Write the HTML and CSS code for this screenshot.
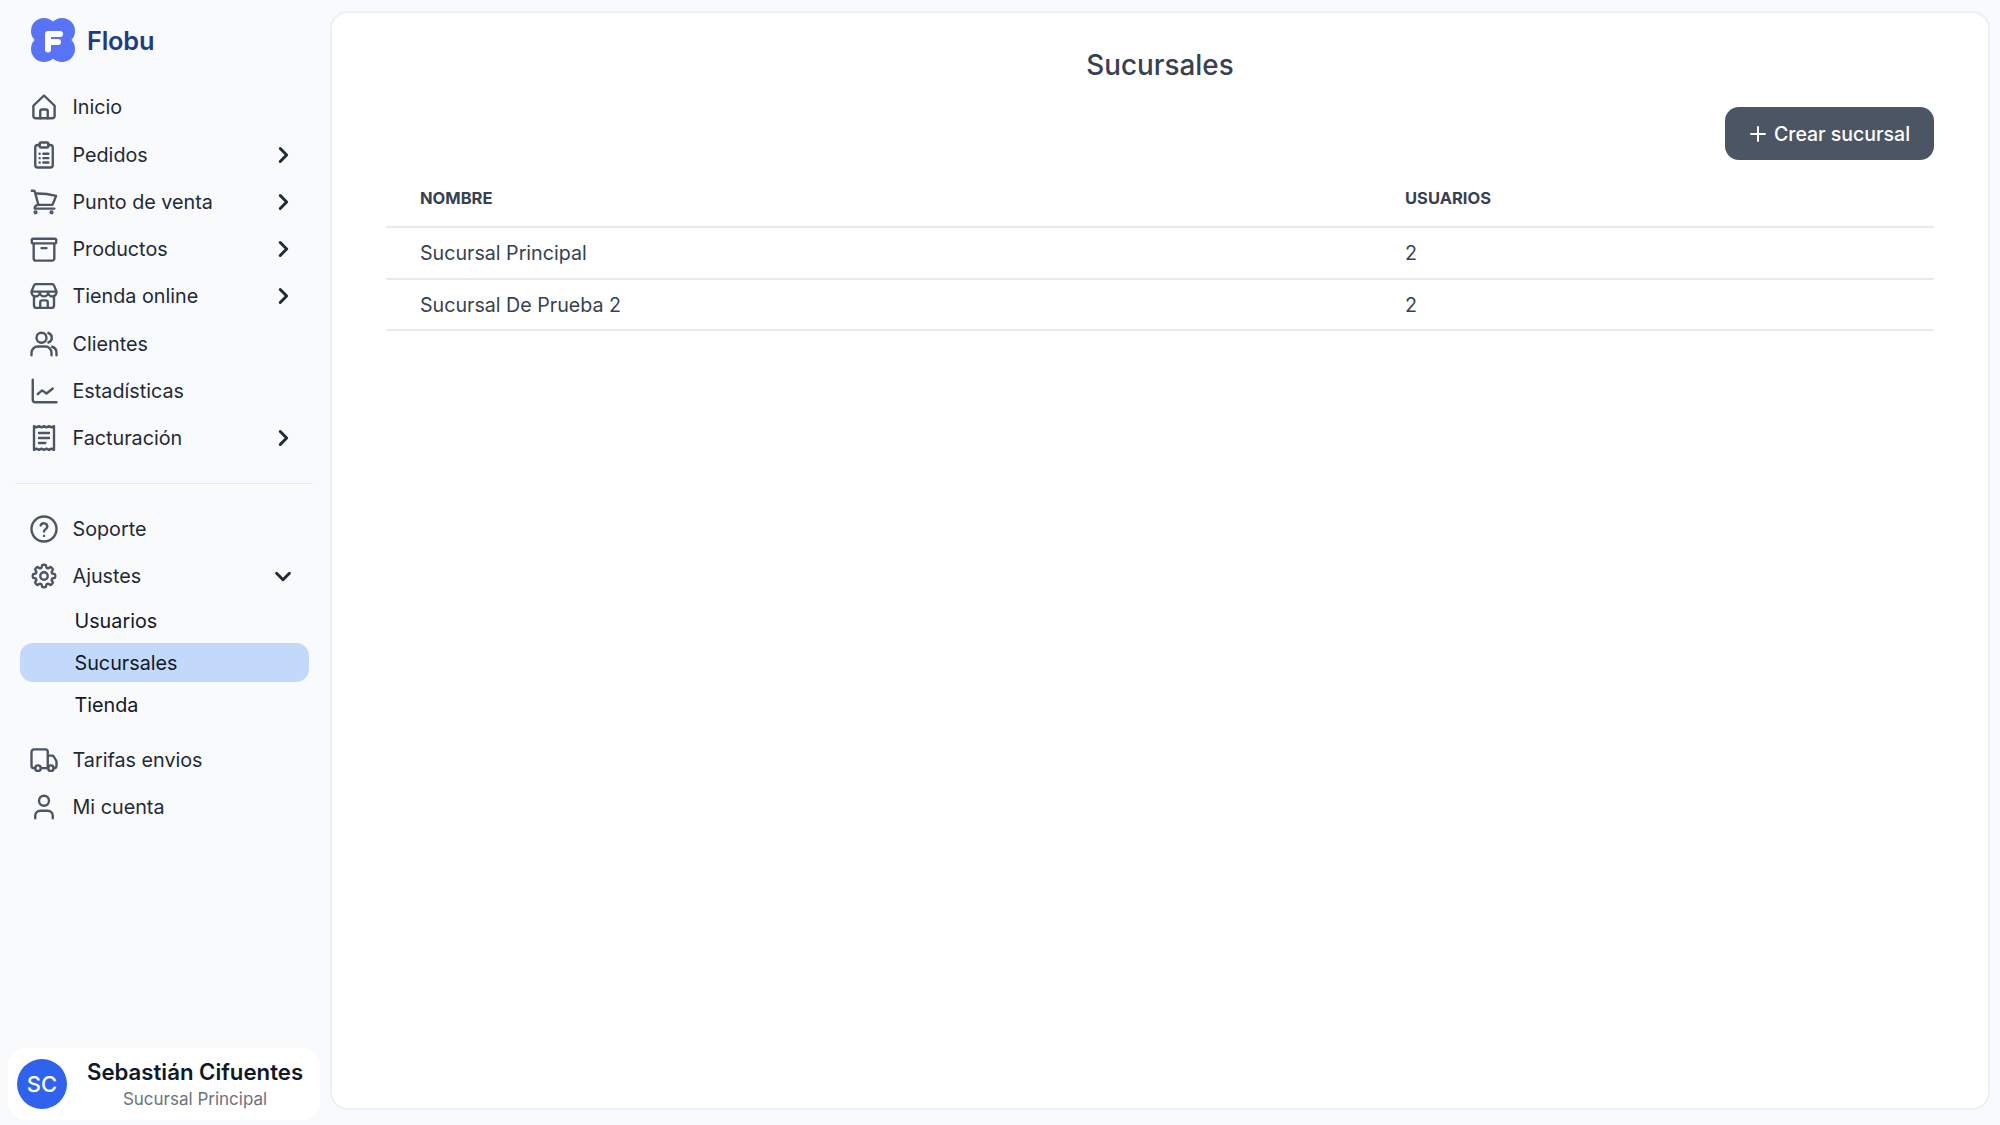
FILE: index.html
```html
<!DOCTYPE html>
<html lang="es">
<head>
<meta charset="utf-8">
<title>Sucursales</title>
<link rel="stylesheet" href="styles.css">
</head>
<body>
<div class="app">
  <aside class="sidebar">
    <div class="brand">
      <svg class="logo" viewBox="0 0 44 44"><g fill="#5873f7"><circle cx="13" cy="13" r="13"/><circle cx="31" cy="13" r="13"/><circle cx="13" cy="31" r="13"/><circle cx="31" cy="31" r="13"/><rect x="8" y="8" width="28" height="28"/></g><path fill="none" stroke="#fff" stroke-width="6" stroke-linecap="round" stroke-linejoin="round" d="M17 31.500V16h12M17 24h10"/></svg>
      <span class="brand-name">Flobu</span>
    </div>
    <nav class="nav">
      <a class="item"><svg class="icon" viewBox="0 0 24 24"><path d="M3.500 11 12 2.800l8.500 8.200V19a2 2 0 0 1-2 2h-13a2 2 0 0 1-2-2Z"/><path d="M9 21v-5.500A1.500 1.500 0 0 1 10.500 14h3a1.500 1.500 0 0 1 1.500 1.500V21"/></svg><span class="label">Inicio</span></a>
      <a class="item"><svg class="icon" viewBox="0 0 24 24"><path d="M8.500 4H7a2 2 0 0 0-2 2v14a2 2 0 0 0 2 2h10a2 2 0 0 0 2-2V6a2 2 0 0 0-2-2h-1.500"/><rect x="8.500" y="2" width="7" height="4" rx="1.200"/><path d="M8.500 11h.01M11.500 11h4M8.500 14.500h.01M11.500 14.500h4M8.500 18h.01M11.500 18h4"/></svg><span class="label">Pedidos</span><svg class="chev" viewBox="0 0 24 24"><path d="m9 5 7 7-7 7"/></svg></a>
      <a class="item"><svg class="icon" viewBox="0 0 24 24"><path d="M2.250 3h1.386c.51 0 .955.343 1.087.835l.383 1.437M7.500 14.250a3 3 0 0 0-3 3h15.750m-12.750-3h11.218c1.121-2.300 2.100-4.684 2.924-7.138a60.114 60.114 0 0 0-16.536-1.840M7.500 14.250 5.106 5.272M6 20.250a.75.75 0 1 1-1.500 0 .75.75 0 0 1 1.500 0Zm12.750 0a.75.75 0 1 1-1.500 0 .75.75 0 0 1 1.500 0Z"/></svg><span class="label">Punto de venta</span><svg class="chev" viewBox="0 0 24 24"><path d="m9 5 7 7-7 7"/></svg></a>
      <a class="item"><svg class="icon" viewBox="0 0 24 24"><path d="M20.250 7.500v12a1.750 1.750 0 0 1-1.750 1.750h-13a1.750 1.750 0 0 1-1.750-1.750v-12M10 11.250h4M3.375 7.500h17.250c.621 0 1.125-.504 1.125-1.125v-1.500c0-.621-.504-1.125-1.125-1.125H3.375c-.621 0-1.125.504-1.125 1.125v1.500c0 .621.504 1.125 1.125 1.125Z"/></svg><span class="label">Productos</span><svg class="chev" viewBox="0 0 24 24"><path d="m9 5 7 7-7 7"/></svg></a>
      <a class="item"><svg class="icon" viewBox="0 0 24 24"><path d="M2 8.500V9a3.300 3.300 0 0 0 6.700 0 3.300 3.300 0 0 0 6.600 0A3.300 3.300 0 0 0 22 9v-.5L20 3.500a1.500 1.500 0 0 0-1.400-1H5.400a1.500 1.500 0 0 0-1.400 1ZM2 8.500h20M8.700 8.500V9M15.300 8.500V9"/><path d="M4 12v7.500a2 2 0 0 0 2 2h12a2 2 0 0 0 2-2V12"/><path d="M9 21.500V17a1.500 1.500 0 0 1 1.500-1.500h3A1.500 1.500 0 0 1 15 17v4.500"/></svg><span class="label">Tienda online</span><svg class="chev" viewBox="0 0 24 24"><path d="m9 5 7 7-7 7"/></svg></a>
      <a class="item"><svg class="icon" viewBox="0 0 24 24"><circle cx="10" cy="7" r="4"/><path d="M2 21v-2a5 5 0 0 1 5-5h6a5 5 0 0 1 5 5v2M15.500 3.200a4 4 0 0 1 0 7.600M22 21v-2a5 5 0 0 0-3.500-4.800"/></svg><span class="label">Clientes</span></a>
      <a class="item"><svg class="icon" viewBox="0 0 24 24"><path d="M3 3v16a2 2 0 0 0 2 2h17"/><path d="m7 14.500 3.500-3 3.500 2.500 5-4"/></svg><span class="label">Estadísticas</span></a>
      <a class="item"><svg class="icon" viewBox="0 0 24 24"><path d="M4 2.500 6 3.500l2-1 2 1 2-1 2 1 2-1 2 1 2-1v19l-2-1-2 1-2-1-2 1-2-1-2 1-2-1-2 1Z"/><path d="M8 8h8M8 12h8M8 16h5"/></svg><span class="label">Facturación</span><svg class="chev" viewBox="0 0 24 24"><path d="m9 5 7 7-7 7"/></svg></a>
    </nav>
    <hr class="divider">
    <nav class="nav">
      <a class="item"><svg class="icon" viewBox="0 0 24 24"><circle cx="12" cy="12" r="10"/><path d="M9.300 9.200a2.800 2.800 0 0 1 5.400.8c0 1.900-2.700 2.300-2.700 4M12 17.500h.01"/></svg><span class="label">Soporte</span></a>
      <a class="item"><svg class="icon" viewBox="0 0 24 24"><path d="M10.343 3.940c.09-.542.56-.94 1.110-.94h1.093c.55 0 1.020.398 1.110.94l.149.894c.07.424.384.764.78.93.398.164.855.142 1.205-.108l.737-.527a1.125 1.125 0 0 1 1.450.12l.773.774c.39.389.44 1.002.12 1.450l-.527.737c-.25.35-.272.806-.107 1.204.165.397.505.71.93.78l.893.15c.543.09.94.559.94 1.109v1.094c0 .55-.397 1.020-.94 1.110l-.894.149c-.424.07-.764.383-.929.78-.165.398-.143.854.107 1.204l.527.738c.32.447.269 1.060-.12 1.450l-.774.773a1.125 1.125 0 0 1-1.449.12l-.738-.527c-.35-.25-.806-.272-1.203-.107-.398.165-.71.505-.781.929l-.149.894c-.09.542-.56.94-1.110.94h-1.094c-.55 0-1.019-.398-1.110-.94l-.148-.894c-.071-.424-.384-.764-.781-.93-.398-.164-.854-.142-1.204.108l-.738.527c-.447.32-1.060.269-1.450-.12l-.773-.774a1.125 1.125 0 0 1-.12-1.450l.527-.737c.25-.35.272-.806.108-1.204-.165-.397-.506-.71-.93-.78l-.894-.15c-.542-.09-.94-.56-.94-1.109v-1.094c0-.55.398-1.020.94-1.110l.894-.149c.424-.07.765-.383.93-.78.165-.398.143-.854-.108-1.204l-.526-.738a1.125 1.125 0 0 1 .12-1.450l.773-.773a1.125 1.125 0 0 1 1.450-.12l.737.527c.35.25.807.272 1.204.107.397-.165.71-.505.78-.929l.15-.894Z"/><path d="M15 12a3 3 0 1 1-6 0 3 3 0 0 1 6 0Z"/></svg><span class="label">Ajustes</span><svg class="chev" viewBox="0 0 24 24"><path d="m5 9 7 7 7-7"/></svg></a>
      <div class="submenu">
        <a class="subitem">Usuarios</a>
        <a class="subitem active">Sucursales</a>
        <a class="subitem">Tienda</a>
      </div>
      <a class="item"><svg class="icon" viewBox="0 0 24 24"><path d="M5 18.500H4a2 2 0 0 1-2-2v-11a2 2 0 0 1 2-2h9a2 2 0 0 1 2 2v13H9.500M15 8.500h3.500a1.500 1.500 0 0 1 1.300.7L22 13v3.500a2 2 0 0 1-2 2h-.5M15 18.500h.5"/><circle cx="7.200" cy="18.500" r="2.200"/><circle cx="17.500" cy="18.500" r="2.200"/></svg><span class="label">Tarifas envios</span></a>
      <a class="item"><svg class="icon" viewBox="0 0 24 24"><circle cx="12" cy="7" r="4"/><path d="M5 21v-2a4 4 0 0 1 4-4h6a4 4 0 0 1 4 4v2"/></svg><span class="label">Mi cuenta</span></a>
    </nav>
    <div class="user">
      <div class="avatar">SC</div>
      <div class="user-info">
        <div class="user-name">Sebastián Cifuentes</div>
        <div class="user-branch">Sucursal Principal</div>
      </div>
    </div>
  </aside>
  <main class="card">
    <h1 class="title">Sucursales</h1>
    <div class="actions">
      <button class="btn"><svg class="plus" viewBox="0 0 18 18"><path d="M9 2v14M2 9h14"/></svg>Crear sucursal</button>
    </div>
    <table class="table">
      <colgroup><col class="col-name"><col></colgroup>
      <thead><tr><th>Nombre</th><th>Usuarios</th></tr></thead>
      <tbody>
        <tr><td>Sucursal Principal</td><td>2</td></tr>
        <tr><td>Sucursal De Prueba 2</td><td>2</td></tr>
      </tbody>
    </table>
  </main>
</div>
</body>
</html>
```
FILE: styles.css
```css
* { box-sizing: border-box; }
html, body { margin: 0; height: 100%; }
body {
  font-family: Inter, "Liberation Sans", sans-serif;
  background: #f8fafc;
  color: #1f2937;
}
.app { display: flex; height: 1125px; overflow: hidden; }

.sidebar {
  width: 330px;
  flex: none;
  display: flex;
  flex-direction: column;
  padding: 18px 0 5px;
}
.brand { display: flex; align-items: center; gap: 12px; padding-left: 31px; height: 44px; margin-bottom: 21.800px; }
.logo { width: 44px; height: 44px; }
.brand-name { font-size: 25.300px; font-weight: 600; color: #1e3a8a; letter-spacing: -.2px; }

.nav { display: flex; flex-direction: column; }
.item {
  height: 47.250px;
  display: flex;
  align-items: center;
  padding-left: 29px;
  font-size: 19.750px;
  color: #1f2937;
}
.icon {
  width: 30px; height: 30px; flex: none;
  fill: none; stroke: #4b5563; stroke-width: 1.900;
  stroke-linecap: round; stroke-linejoin: round;
  margin-right: 13.500px;
}
.label { flex: 1; }
.chev {
  width: 22px; height: 22px; flex: none; margin-right: 36px;
  fill: none; stroke: #1f2937; stroke-width: 3.200;
  stroke-linecap: round; stroke-linejoin: round;
}
.divider { border: 0; border-top: 1.500px solid #e5e7eb; margin: 21px 17px 21.500px 15px; }
.submenu { display: flex; flex-direction: column; padding: 0 21px 0 19.500px; margin-bottom: 10.500px; }
.subitem {
  height: 42px;
  display: flex;
  align-items: center;
  padding-left: 55px;
  font-size: 19.750px;
  color: #111827;
  border-radius: 13px;
}
.subitem.active { background: #c3d9fb; height: 39px; margin: 1.500px 0; }

.user {
  margin: auto 10px 0 8px;
  height: 72px;
  background: #fff;
  border-radius: 18px;
  display: flex;
  align-items: center;
  padding-left: 9px;
  gap: 20px;
}
.avatar {
  width: 50px; height: 50px; border-radius: 50%;
  background: #2f62ee; color: #fff; font-size: 22px; font-weight: 500;
  display: flex; align-items: center; justify-content: center; flex: none;
}
.user-info { text-align: center; padding-top: 2px; }
.user-name { font-size: 22.200px; font-weight: 600; color: #111827; line-height: 28px; white-space: nowrap; }
.user-branch { font-size: 17px; color: #6b7280; line-height: 26px; }

.card {
  flex: 1;
  margin: 11px 10px 15px 0;
  background: #fff;
  border: 2px solid #eef0f3;
  border-radius: 18px;
  padding: 0 54px 0 54px;
}
.title { margin: 32px 0 0; text-align: center; font-size: 27.800px; font-weight: 500; color: #374151; line-height: 40px; }
.actions { display: flex; justify-content: flex-end; margin-top: 22px; }
.btn {
  height: 53px; width: 209px;
  background: #4b5563; color: #fff;
  border: 0; border-radius: 14px;
  font: 500 19.500px Inter, "Liberation Sans", sans-serif;
  display: flex; align-items: center; justify-content: center; gap: 7px;
}
.plus { width: 18px; height: 18px; fill: none; stroke: #fff; stroke-width: 2; stroke-linecap: round; }
.table { width: 100%; border-collapse: collapse; table-layout: fixed; }
.col-name { width: 985px; }
th {
  height: 67px;
  padding: 10px 0 0 34px;
  text-align: left;
  text-transform: uppercase;
  font-size: 16.500px;
  font-weight: 700;
  color: #374151;
  border-bottom: 2px solid #e8eaed;
}
td {
  height: 51.500px;
  padding: 1px 0 0 34px;
  font-size: 19.650px;
  color: #374151;
  border-bottom: 2px solid #e8eaed;
}
```
